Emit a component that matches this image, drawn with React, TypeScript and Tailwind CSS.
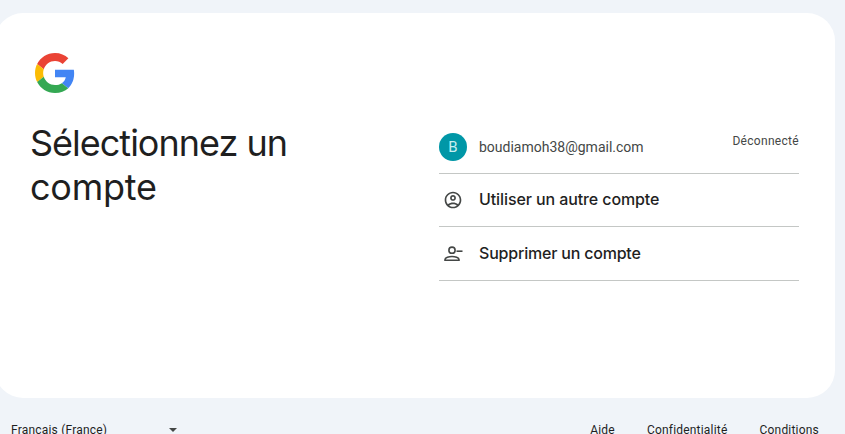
export default function App() {
  return (
    <div className="h-[434px] w-[845px] overflow-hidden bg-[#f0f4f9] font-['Roboto',sans-serif] flex flex-col">
      <main className="ml-[-5px] mt-[13px] h-[385px] w-[840px] shrink-0 rounded-[28px] bg-white pl-9 pr-9 pt-10 flex">
        <section className="w-[408px] shrink-0">
          <svg viewBox="0 0 48 48" className="h-[40px] w-[40px] ml-[4px] block">
            <path fill="#EA4335" d="M24 9.5c3.54 0 6.71 1.22 9.21 3.6l6.85-6.85C35.9 2.38 30.47 0 24 0 14.62 0 6.51 5.38 2.56 13.22l7.98 6.19C12.43 13.72 17.74 9.5 24 9.5z" />
            <path fill="#4285F4" d="M46.98 24.55c0-1.57-.15-3.09-.38-4.55H24v9.02h12.94c-.58 2.96-2.26 5.48-4.78 7.18l7.73 6c4.51-4.18 7.09-10.36 7.09-17.65z" />
            <path fill="#FBBC05" d="M10.53 28.59c-.48-1.45-.76-2.99-.76-4.59s.27-3.14.76-4.59l-7.98-6.19C.92 16.46 0 20.12 0 24c0 3.88.92 7.54 2.56 10.78l7.97-6.19z" />
            <path fill="#34A853" d="M24 48c6.48 0 11.93-2.13 15.89-5.81l-7.73-6c-2.15 1.45-4.92 2.3-8.16 2.3-6.26 0-11.57-4.22-13.47-9.91l-7.98 6.19C6.51 42.62 14.62 48 24 48z" />
          </svg>
          <h1 className="ml-[-1px] mt-[28px] text-[36px] leading-[44px] font-normal text-[#1f1f1f] w-[300px] font-['Inter',sans-serif] tracking-[-1px]">Sélectionnez un <span className="tracking-[-0.25px]">compte</span></h1>
        </section>
        <section className="w-[360px] pt-[80px]">
          <div className="relative flex h-[41px] items-start border-b border-[#c4c7c5]">
            <div className="flex h-[28px] w-[28px] items-center justify-center rounded-full bg-[#0097a7] text-[15px] text-[#c8eef1]">B</div>
            <span className="ml-3 mt-[5px] text-[14px] leading-[18px] text-[#444746]">boudiamoh38@gmail.com</span>
            <span className="absolute right-0 top-0 text-[12px] leading-4 tracking-[0.3px] text-[#444746]">Déconnecté</span>
          </div>
          <div className="flex h-[53px] items-center border-b border-[#c4c7c5] pl-[4px]">
            <svg viewBox="0 0 24 24" className="h-[20px] w-[20px] fill-[#444746]">
              <path d="M12 2C6.48 2 2 6.48 2 12s4.48 10 10 10 10-4.48 10-10S17.52 2 12 2zM7.35 18.5C8.66 17.56 10.26 17 12 17s3.34.56 4.65 1.5C15.34 19.44 13.74 20 12 20s-3.34-.56-4.65-1.5zm10.79-1.38C16.45 15.8 14.32 15 12 15s-4.45.8-6.14 2.12C4.7 15.73 4 13.95 4 12c0-4.42 3.58-8 8-8s8 3.58 8 8c0 1.95-.7 3.73-1.86 5.12z" />
              <path d="M12 6c-1.93 0-3.5 1.57-3.5 3.5S10.07 13 12 13s3.5-1.57 3.5-3.5S13.93 6 12 6zm0 5c-.83 0-1.5-.67-1.5-1.5S11.17 8 12 8s1.5.67 1.5 1.5S12.83 11 12 11z" />
            </svg>
            <span className="ml-[16px] pb-[2px] text-[16px] font-medium text-[#1f1f1f] font-['Inter',sans-serif] tracking-[-0.1px]">Utiliser un autre compte</span>
          </div>
          <div className="flex h-[54px] items-center border-b border-[#c4c7c5] pl-[4px]">
            <svg viewBox="0 0 20 20" className="h-[20px] w-[20px] fill-none stroke-[#444746] stroke-[1.6]">
              <circle cx="9" cy="6.2" r="3.1" />
              <path d="M2 16.2v-.7c0-2 4-3 7-3s7 1 7 3v.7z" />
              <path d="M13.5 7.2h6" />
            </svg>
            <span className="ml-[16px] pb-[2px] text-[16px] font-medium text-[#1f1f1f] font-['Inter',sans-serif] tracking-[-0.2px]">Supprimer un compte</span>
          </div>
        </section>
      </main>
      <footer className="mt-[24px] flex h-4 shrink-0 items-center pl-[11px] pr-[26px] text-[12px] leading-4 tracking-[0.2px] text-[#1f1f1f]">
        <span className="w-[158px]">Français (France)</span>
        <span className="h-0 w-0 border-x-[4.5px] border-t-[4.5px] border-x-transparent border-t-[#444746]" />
        <nav className="ml-auto flex gap-8">
          <span>Aide</span>
          <span>Confidentialité</span>
          <span>Conditions</span>
        </nav>
      </footer>
    </div>
  );
}
